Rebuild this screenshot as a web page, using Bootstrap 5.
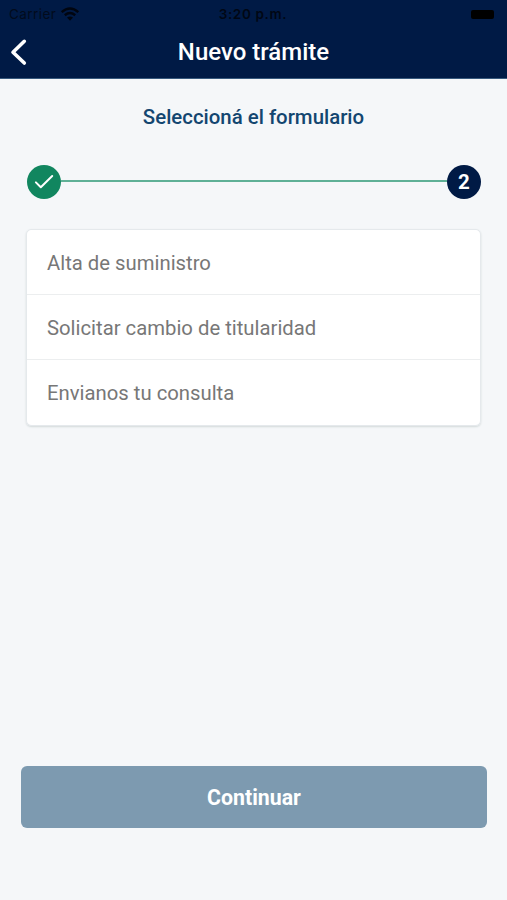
<!DOCTYPE html>
<html lang="es">
<head>
<meta charset="utf-8">
<meta name="viewport" content="width=device-width, initial-scale=1">
<title>Nuevo trámite</title>
<link href="https://cdn.jsdelivr.net/npm/bootstrap@5.3.0/dist/css/bootstrap.min.css" rel="stylesheet">
<style>
body{font-family:Roboto,"Liberation Sans",sans-serif;background:#f5f7f9;height:900px;overflow:hidden}
.app-top{background:#001a45;height:79px;border-bottom:1px solid #37597d}
.status-row{height:27px;font-family:Inter,sans-serif;font-size:13.5px;line-height:25px;color:#020b1c;padding:2px 9px 0}
.status-row .clock{font-weight:600;letter-spacing:.65px;color:#000714;padding-left:3px}
.status-row .carrier{letter-spacing:.45px}
.battery{width:23px;height:9px;border-radius:2px;background:#000}
.title-row{height:51px}
.app-title{font-size:24px;font-weight:500;line-height:50px}
.back-btn{width:38px}
.subtitle{font-size:20.4px;font-weight:500;line-height:26px;color:#134670;margin-top:25px}
.steps{margin:35px 26px 0 27px;height:34px}
.step-dot{width:34px;height:34px;font-size:20.5px;line-height:35px}
.step-done{background:#11865f}
.step-now{background:#001a45}
.step-line{height:2px;background:#5fb096;margin-top:-2px}
.forms{margin:30px 26px 0;border:1px solid #e5e9ec;border-radius:5px;box-shadow:0 1px 2px #d2d9da}
.forms .list-group-item{height:65px;padding:2px 20px 0;font-size:20.3px;color:#777;border-color:#eceeef}
.continue-btn,.continue-btn:disabled{margin:0 20px 72px 21px;height:62px;padding:8px 0 6px;background:#7d9ab0;color:#fff;font-size:21.3px;line-height:48px;font-weight:700;border:0;border-radius:6px;opacity:1}
</style>
</head>
<body class="d-flex flex-column">
<header class="app-top flex-shrink-0">
  <div class="status-row row g-0 align-items-center">
    <div class="col d-flex align-items-center">
      <span class="carrier">Carrier</span>
      <svg class="ms-1" width="20" height="15" viewBox="0 0 20 15" fill="none" stroke="#000510" stroke-width="2.5"><path d="M1.7 5.1Q10 -2 18.3 5.1M4.8 8.2Q10 3.9 15.2 8.2"/><path d="M7 10.5Q10 8.3 13 10.5L10 13.7Z" fill="#000510" stroke="none"/></svg>
    </div>
    <div class="col-auto clock">3:20 p.m.</div>
    <div class="col d-flex justify-content-end pe-1"><span class="battery"></span></div>
  </div>
  <div class="title-row d-flex">
    <button class="back-btn btn p-0 border-0 d-flex align-items-center" aria-label="Volver">
      <svg width="38" height="51" viewBox="0 0 38 51" fill="none" stroke="#fff" stroke-width="3.6" stroke-linecap="round" stroke-linejoin="round"><path d="M24.3 14.3L13 25.2L24.3 36"/></svg>
    </button>
    <h1 class="app-title text-white text-center flex-grow-1 mb-0">Nuevo trámite</h1>
    <div class="back-btn"></div>
  </div>
</header>
<main class="d-flex flex-column flex-grow-1">
  <h2 class="subtitle text-center mb-0">Seleccioná el formulario</h2>
  <div class="steps d-flex align-items-center">
    <div class="step-dot step-done rounded-circle flex-shrink-0 d-flex">
      <svg width="34" height="34" viewBox="0 0 34 34" fill="none" stroke="#fff" stroke-width="2" stroke-linecap="round" stroke-linejoin="round"><path d="M8.9 17.4L13.8 22.2L25.2 11"/></svg>
    </div>
    <div class="step-line flex-grow-1"></div>
    <div class="step-dot step-now rounded-circle flex-shrink-0 text-white text-center fw-bold">2</div>
  </div>
  <div class="forms list-group list-group-flush">
    <a class="list-group-item d-flex align-items-center">Alta de suministro</a>
    <a class="list-group-item d-flex align-items-center">Solicitar cambio de titularidad</a>
    <a class="list-group-item d-flex align-items-center">Envianos tu consulta</a>
  </div>
  <button class="continue-btn btn mt-auto" disabled>Continuar</button>
</main>
<script src="https://cdn.jsdelivr.net/npm/bootstrap@5.3.0/dist/js/bootstrap.bundle.min.js"></script>
</body>
</html>
